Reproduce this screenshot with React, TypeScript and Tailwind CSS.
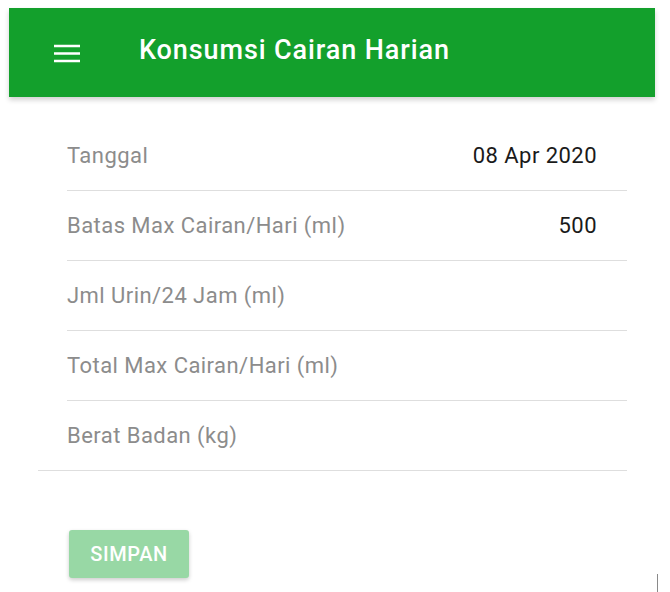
import React from 'react';

interface FieldRowProps {
  label: string;
  value?: string;
  last?: boolean;
}

function FieldRow({ label, value, last }: FieldRowProps) {
  return (
    <div
      className={`flex h-[70px] items-center justify-between border-b border-[#dedede] pr-[30px] ${
        last ? 'pl-[29px]' : 'ml-[29px]'
      }`}
    >
      <span className="text-[22px] tracking-[0.45px] text-[#8c8c8c]">{label}</span>
      {value && <span className="text-[22px] tracking-[0.45px] text-[#1a1a1a]">{value}</span>}
    </div>
  );
}

export default function App() {
  return (
    <div className="min-h-[592px] w-[670px] bg-white font-['Roboto',sans-serif]">
      <div className="pl-[9px] pr-[15px] pt-2">
        {/* App bar */}
        <header className="flex h-[89px] items-center bg-[#13a02c] shadow-[0_3px_5px_rgba(0,0,0,0.18)]">
          <svg
            className="ml-[44px] h-[20px] w-[28px]"
            viewBox="0 0 28 20"
            fill="none"
            stroke="white"
            strokeWidth="2.6"
          >
            <path d="M1 3h26M1 10.5h26M1 18h26" />
          </svg>
          <h1 className="mb-[4px] ml-[58px] text-[27px] font-medium tracking-[0.9px] text-white">
            Konsumsi Cairan Harian
          </h1>
        </header>
      </div>

      {/* Form */}
      <div className="ml-[38px] mt-[24px] w-[589px]">
        <FieldRow label="Tanggal" value="08 Apr 2020" />
        <FieldRow label="Batas Max Cairan/Hari (ml)" value="500" />
        <FieldRow label="Jml Urin/24 Jam (ml)" />
        <FieldRow label="Total Max Cairan/Hari (ml)" />
        <FieldRow label="Berat Badan (kg)" last />
      </div>

      <div className="mt-[59px] flex items-end justify-between pl-[69px] pr-[12px]">
        <button className="h-[48px] w-[120px] rounded-[3px] bg-[#98d8a5] text-[20px] font-medium tracking-[0.6px] text-white shadow-[0_2px_4px_rgba(0,0,0,0.2)]">
          SIMPAN
        </button>
        <div className="mb-[-14px] h-[18px] w-px bg-[#8a8a8a]" />
      </div>
    </div>
  );
}
